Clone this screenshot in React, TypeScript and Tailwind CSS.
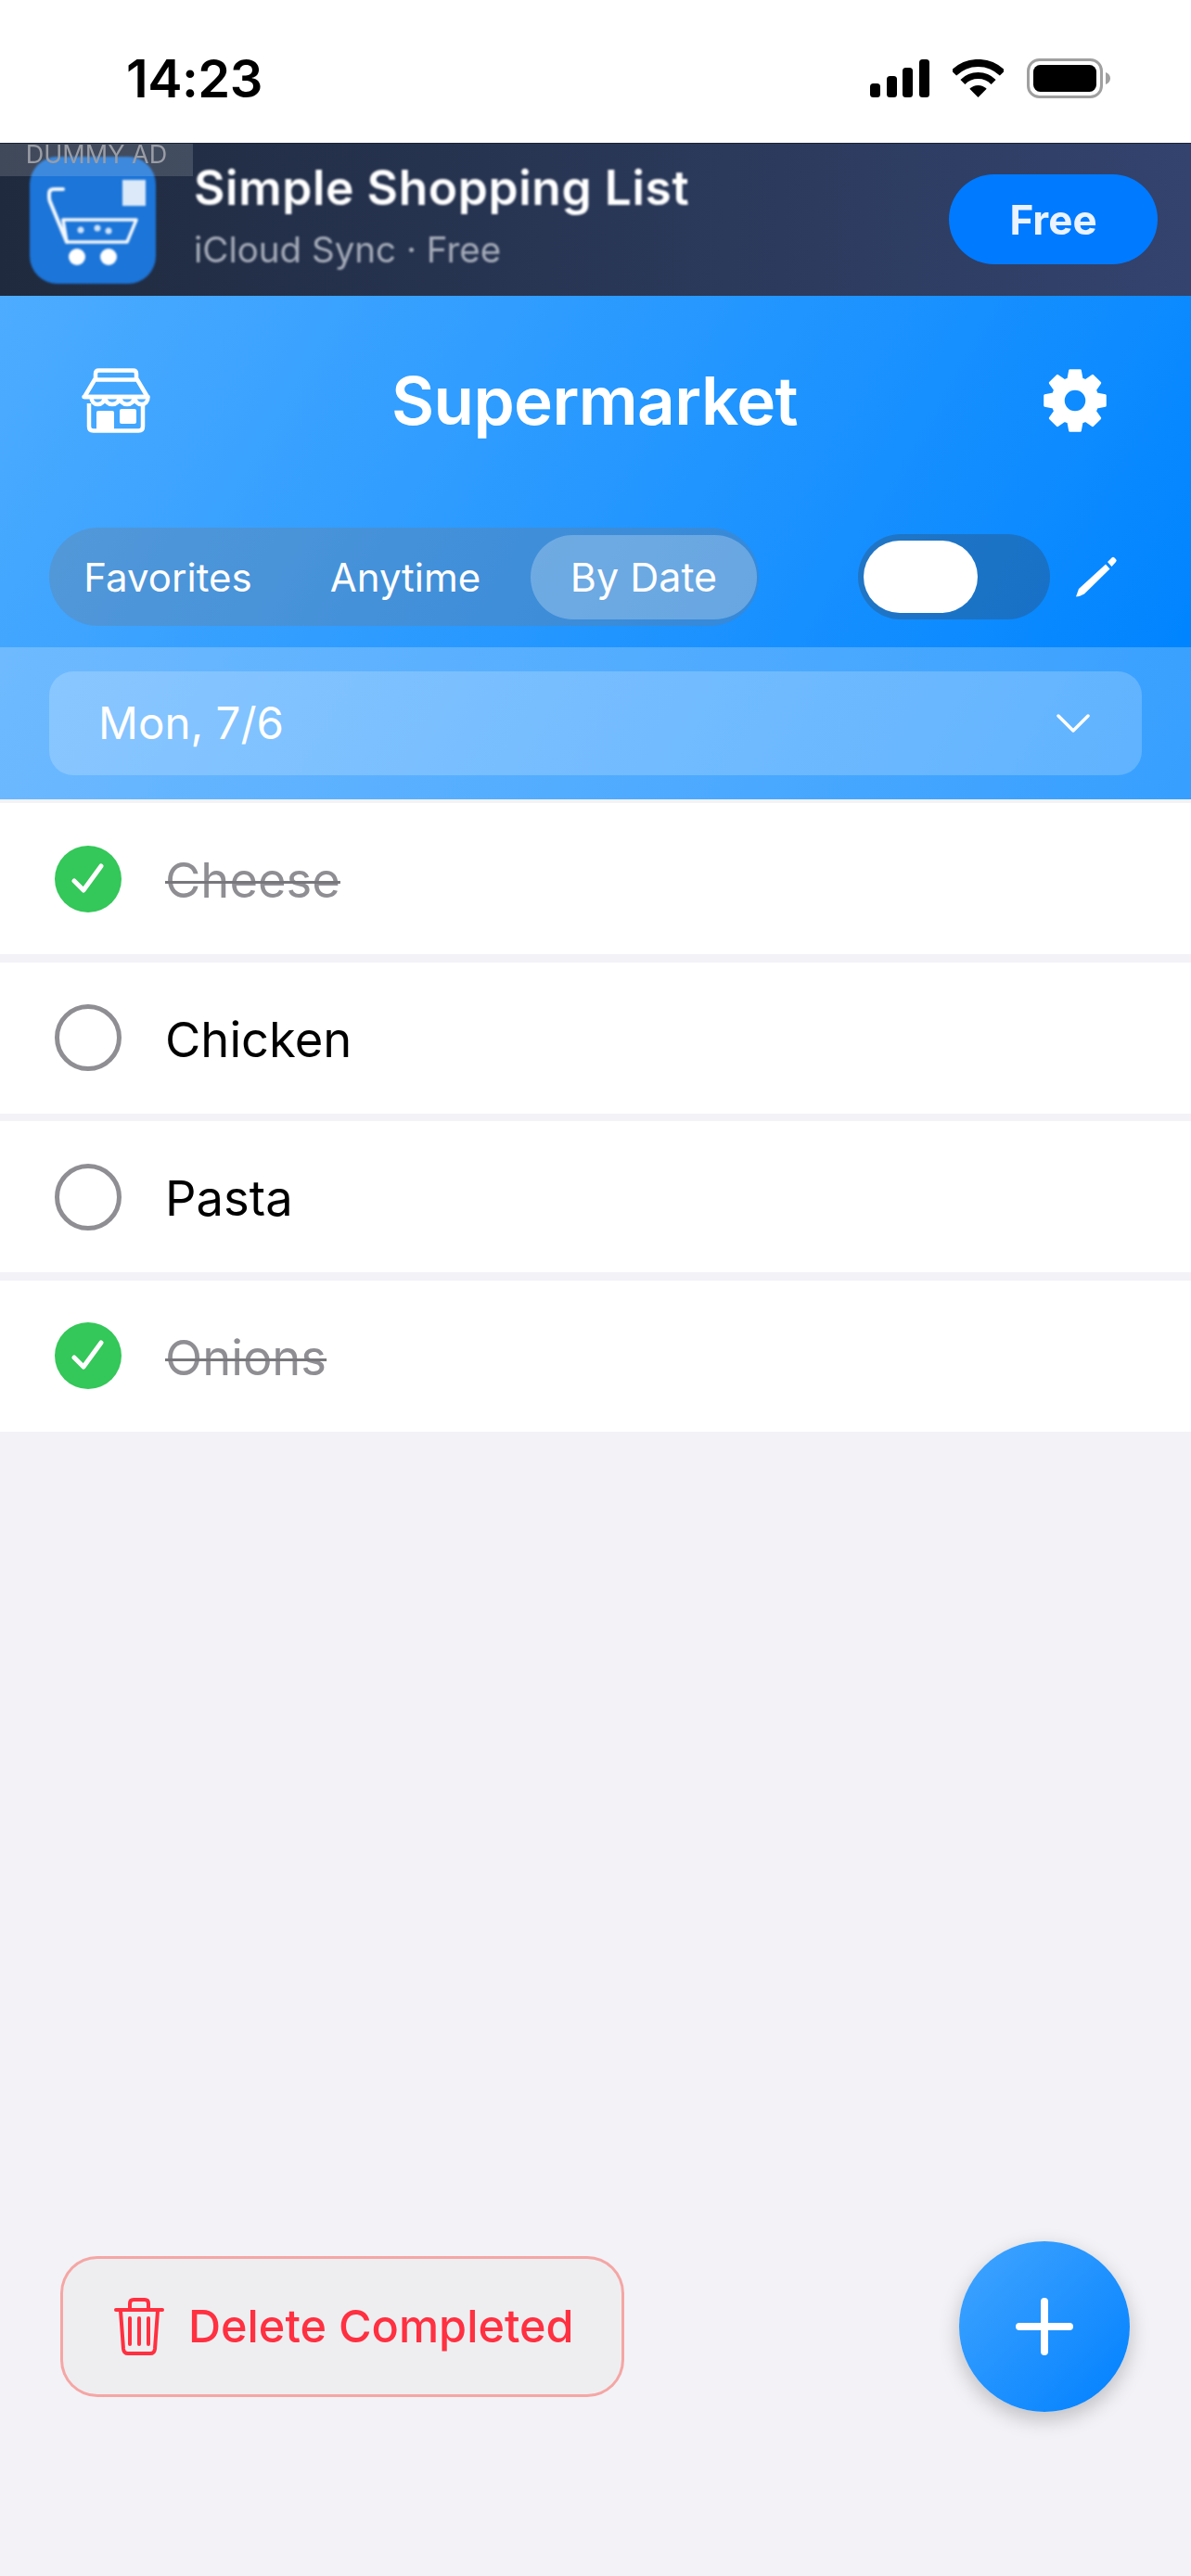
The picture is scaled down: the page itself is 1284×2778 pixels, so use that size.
import React from "react";

function gearPath(cx: number, cy: number, R: number, r: number, hole: number) {
  const pts: string[] = [];
  const n = 8;
  for (let i = 0; i < n; i++) {
    const a = (i * 2 * Math.PI) / n - Math.PI / 2;
    const list: [number, number][] = [
      [r, -0.3],
      [R, -0.17],
      [R, 0.17],
      [r, 0.3],
    ];
    for (const [rad, off] of list) {
      const x = cx + rad * Math.cos(a + off);
      const y = cy + rad * Math.sin(a + off);
      pts.push(`${x.toFixed(2)} ${y.toFixed(2)}`);
    }
  }
  const ring = `M${pts.join("L")}Z`;
  return `${ring}M${cx - hole} ${cy}a${hole} ${hole} 0 1 0 ${hole * 2} 0a${hole} ${hole} 0 1 0 ${-hole * 2} 0Z`;
}

function Signal() {
  return (
    <svg width="64" height="41" viewBox="0 0 64 41" fill="#000">
      <rect x="0" y="26" width="11" height="15" rx="3.5" />
      <rect x="18" y="18" width="11" height="23" rx="3.5" />
      <rect x="35" y="9" width="11" height="32" rx="3.5" />
      <rect x="53" y="0" width="11" height="41" rx="3.5" />
    </svg>
  );
}

function Wifi() {
  return (
    <svg width="55" height="41" viewBox="0 0 55 41" fill="none" stroke="#000">
      <path d="M1.3 14.8A37 37 0 0 1 53.7 14.8" strokeWidth="8" />
      <path d="M10.9 24.4A23.5 23.5 0 0 1 44.1 24.4" strokeWidth="7" />
      <path d="M18.3 31.8A13 13 0 0 1 36.7 31.8L27.5 41Z" fill="#000" stroke="none" />
    </svg>
  );
}

function Battery() {
  return (
    <svg width="90" height="43" viewBox="0 0 90 43">
      <rect x="1.5" y="1.5" width="79" height="40" rx="12" fill="none" stroke="#a0a0a0" strokeWidth="3" />
      <rect x="7" y="7" width="68" height="29" rx="7.5" fill="#000" />
      <path d="M85 15c3 1 5 3.500 5 6.500s-2 5.500-5 6.500z" fill="#a0a0a0" />
    </svg>
  );
}

function CartIcon() {
  return (
    <div className="w-[136px] h-[137px] rounded-[30px] bg-[#1c75d8] shrink-0 blur-[0.8px]">
      <svg width="136" height="137" viewBox="0 0 136 137" fill="none" stroke="#f4f8fd" strokeWidth="3.5">
        <path d="M36 35H26q-5 0-5 5v4q0 3 2 7l17 41" strokeLinecap="round" strokeWidth="4" />
        <path d="M36 68h79l-10 24H40Z" strokeLinejoin="round" />
        <rect x="100" y="25" width="25" height="28" fill="#dbe9f8" stroke="none" />
        <circle cx="51" cy="108" r="9" fill="#fff" stroke="none" />
        <circle cx="85" cy="108" r="9" fill="#fff" stroke="none" />
        <circle cx="55" cy="79" r="3.500" fill="#cfe2f7" stroke="none" />
        <circle cx="73" cy="77" r="3.500" fill="#cfe2f7" stroke="none" />
        <circle cx="85" cy="80" r="3.500" fill="#cfe2f7" stroke="none" />
      </svg>
    </div>
  );
}

function StoreIcon() {
  return (
    <svg width="74" height="70" viewBox="0 0 74 70" fill="none" stroke="#fff" strokeWidth="4.500" strokeLinejoin="round">
      <path d="M15 13V6q0-3.500 3.500-3.500h37Q59 2.500 59 6v7" />
      <path d="M14 12.500h46L71 31H3Z" />
      <path d="M2.500 31h69c0 5-3 8-7 8s-7-3-7.500-8c-.5 5-3.500 8-8 8s-7.500-3-8-8c-.5 5-3.500 8-8 8s-7.500-3-8-8c-.5 5-3.500 8-7.500 8s-7-3-7-8Z" fill="#fff" fillOpacity="0.08" />
      <path d="M8 38v25q0 4.500 4.500 4.500h49Q66 67.500 66 63V38" />
      <rect x="16" y="46" width="19" height="22" rx="2" fill="#fff" stroke="none" />
      <rect x="41" y="44" width="18" height="16" rx="2" fill="#fff" stroke="none" />
    </svg>
  );
}

function GearIcon() {
  return (
    <svg width="70" height="70" viewBox="0 0 70 70">
      <path d={gearPath(35, 35, 33, 24.5, 12.5)} fill="#fff" fillRule="evenodd" stroke="#fff" strokeWidth="2.500" strokeLinejoin="round" />
    </svg>
  );
}

function PencilIcon() {
  return (
    <svg width="46" height="46" viewBox="0 0 46 46" fill="#fff">
      <path d="M1 44.500 4 36 33 9.500l4.500 5L10 41.500q-4 2.500-9 3Z" />
      <path d="M35 7l4.500-4.500q1.500-1.500 3 0l1.500 1.500q1.500 1.500 0 3L39.500 12Z" />
    </svg>
  );
}

function TrashIcon() {
  return (
    <svg width="54" height="62" viewBox="0 0 54 62" fill="none" stroke="#ff3040" strokeWidth="4" strokeLinecap="round" strokeLinejoin="round">
      <path d="M2 13h50" />
      <path d="M17 12V6q0-4 4-4h12q4 0 4 4v6" />
      <path d="M7 14l3 41q.5 5 5 5h24q4.500 0 5-5l3-41" />
      <path d="M17 22v28M27 22v28M37 22v28" />
    </svg>
  );
}

function Check() {
  return (
    <svg width="36" height="38" viewBox="0 0 36 38" fill="none" stroke="#fff" strokeWidth="5" strokeLinecap="round" strokeLinejoin="round">
      <path d="M3 21 13 31 32 5" />
    </svg>
  );
}

function Row({ label, done }: { label: string; done: boolean }) {
  return (
    <div className="h-[163px] bg-white flex items-center pl-[59px]">
      {done ? (
        <div className="w-[72px] h-[72px] rounded-full bg-[#34c759] flex items-center justify-center shrink-0">
          <Check />
        </div>
      ) : (
        <div className="w-[72px] h-[72px] rounded-full border-[5px] border-[#8e8e93] shrink-0" />
      )}
      {done ? (
        <span className="ml-[47px] text-[52.500px] leading-[60px] mt-[3px] text-[#8e8e93] line-through decoration-[3px] decoration-[#77777c]">
          {label}
        </span>
      ) : (
        <span className="ml-[47px] text-[52.500px] leading-[60px] mt-[3px] text-black">{label}</span>
      )}
    </div>
  );
}

export default function App() {
  return (
    <div className="w-[1284px] h-[2778px] bg-[#f2f2f7] flex flex-col font-['Inter','Noto_Sans',sans-serif] overflow-hidden">
      {/* Status bar */}
      <div className="h-[154px] bg-white flex items-start justify-between pl-[136px] pr-[87px] pt-[63px] shrink-0">
        <span className="text-[56px] leading-[44px] font-semibold text-black tracking-[-0.5px]">14:23</span>
        <div className="flex items-center gap-[25px]">
          <Signal />
          <Wifi />
          <Battery />
        </div>
      </div>

      {/* Ad */}
      <div className="relative h-[165px] shrink-0 bg-gradient-to-r from-[#1f2a3e] to-[#33436e] border-t border-[#1a2235] flex items-center pl-[32px] pr-[36px] overflow-hidden">
        <CartIcon />
        <div className="ml-[41px] flex-1 flex flex-col blur-[0.8px] -mt-[11px]">
          <span className="text-[51.5px] leading-[60px] font-semibold text-white tracking-[0.6px]">Simple Shopping List</span>
          <span className="text-[38.5px] leading-[44px] mt-[15px] text-[#a6adba]">iCloud Sync · Free</span>
        </div>
        <div className="w-[225px] h-[97px] rounded-full bg-[#007aff] flex items-center justify-center blur-[0.5px] -mt-[1px]">
          <span className="text-[44px] font-bold text-[#eaf3ff]">Free</span>
        </div>
        <div className="absolute left-0 top-0 w-[208px] h-[35px] bg-white/15 flex items-center justify-center blur-[0.6px]">
          <span className="text-[27px] leading-[30px] -mt-[12px] text-[#9a9da5]">DUMMY AD</span>
        </div>
      </div>

      {/* Header */}
      <div className="h-[379px] shrink-0 bg-[linear-gradient(120deg,#4dacff_0%,#0084ff_100%)] flex flex-col pt-[78px] px-[53px]">
        <div className="grid grid-cols-[1fr_auto_1fr] items-center h-[70px] pl-[35px] pr-[37px]">
          <div className="justify-self-start"><StoreIcon /></div>
          <span className="text-[71px] leading-[70px] font-semibold text-white tracking-[-0.6px]">Supermarket</span>
          <div className="justify-self-end"><GearIcon /></div>
        </div>
        <div className="flex items-center mt-[102px] h-[106px]">
          <div className="w-[765px] h-[106px] rounded-full bg-[rgba(118,118,128,0.3)] flex items-center pl-[3px] gap-[6px]">
            <div className="w-[250px] h-[91px] flex items-center justify-center text-[42px] text-white">Favorites</div>
            <div className="w-[250px] h-[91px] flex items-center justify-center text-[42px] text-white">Anytime</div>
            <div className="w-[244px] h-[91px] ml-[4px] rounded-full bg-white/25 flex items-center justify-center text-[43px] text-white">By Date</div>
          </div>
          <div className="ml-[107px] w-[207px] h-[92px] rounded-full bg-[rgba(60,60,67,0.3)] flex items-center pl-[6px]">
            <div className="w-[123px] h-[78px] rounded-full bg-white" />
          </div>
          <div className="ml-[27px]"><PencilIcon /></div>
        </div>
      </div>

      {/* Date picker */}
      <div className="h-[164px] shrink-0 bg-[linear-gradient(120deg,#6fbaff_0%,#369fff_100%)] flex items-center px-[53px]">
        <div className="w-full h-[112px] rounded-[26px] bg-white/20 flex items-center justify-between pl-[53px] pr-[56px]">
          <span className="text-[47.500px] leading-[60px] text-white">Mon, 7/6</span>
          <svg width="36" height="22" viewBox="0 0 36 22" fill="none" stroke="#fff" strokeWidth="3.500" strokeLinecap="round" strokeLinejoin="round">
            <path d="M2 3l16 16L34 3" />
          </svg>
        </div>
      </div>

      {/* List */}
      <div className="flex flex-col gap-[8.500px] pt-[4px] shrink-0">
        <Row label="Cheese" done />
        <Row label="Chicken" done={false} />
        <Row label="Pasta" done={false} />
        <Row label="Onions" done />
      </div>

      {/* Bottom actions */}
      <div className="mt-auto flex items-center justify-between pl-[65px] pr-[66px] pb-[177px]">
        <div className="w-[608px] h-[152px] rounded-[40px] border-[3px] border-[#ff3b30]/40 bg-[#eeeef1] flex items-center pl-[55px]">
          <TrashIcon />
          <span className="ml-[26px] text-[48.600px] leading-[60px] font-medium text-[#ff3040]">Delete Completed</span>
        </div>
        <div className="w-[184px] h-[184px] rounded-full bg-[linear-gradient(135deg,#42a5ff_0%,#0080ff_100%)] shadow-[0_8px_22px_rgba(0,0,0,0.22)] flex items-center justify-center">
          <svg width="62" height="62" viewBox="0 0 62 62" stroke="#fff" strokeWidth="8" strokeLinecap="round">
            <path d="M31 4v54M4 31h54" />
          </svg>
        </div>
      </div>
    </div>
  );
}
